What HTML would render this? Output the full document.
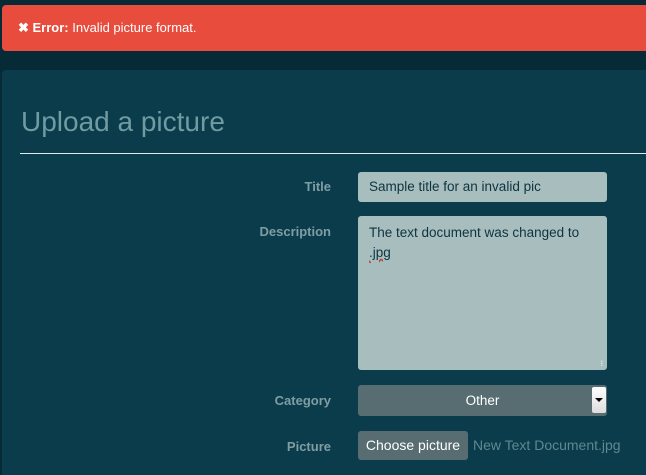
<!DOCTYPE html>
<html style="height:475px;overflow:hidden"><head><meta charset="utf-8"><style>
body{margin:0;width:646px;height:475px;background:#062b37;font-family:"Liberation Sans",sans-serif;overflow:hidden;position:relative}
.alert{position:absolute;left:2px;top:5px;width:650px;height:46px;background:#e74c3c;border-radius:4px;color:#fff;font-size:13px;line-height:46px;padding-left:16px;box-sizing:border-box}
.panel{position:absolute;left:2px;top:70px;width:660px;height:420px;background:#0b3c4b;border-radius:4px}
h1{position:absolute;left:21px;top:106px;margin:0;font-weight:normal;font-size:28px;color:#6f9ba1;}
.hr{position:absolute;left:20px;top:153px;width:640px;height:1px;background:#dfe8ea}
.lbl{position:absolute;right:315px;font-weight:bold;font-size:13px;color:#7f9ea3}
.inp{position:absolute;left:358px;width:249px;background:#a8bebe;border-radius:3px;color:#0e3340;font-size:13.5px;box-sizing:border-box;padding-left:11px}
</style></head><body>
<div class="alert"><b>&#10006; Error:</b> Invalid picture format.</div>
<div class="panel"></div>
<h1>Upload a picture</h1>
<div class="hr"></div>
<div class="lbl" style="top:179px">Title</div>
<div class="inp" style="top:172px;height:30px;line-height:30px">Sample title for an invalid pic</div>
<div class="lbl" style="top:224px">Description</div>
<div class="inp" style="top:216px;height:154px;padding-top:7px;line-height:20px">The text document was changed to<br><span style="text-decoration:underline wavy #c0392b">.jpg</span>
<span style="position:absolute;right:4px;bottom:2px;font-size:8px;color:#fff;line-height:8px">⁝</span></div>
<div class="lbl" style="top:393px">Category</div>
<div class="inp" style="top:385px;height:31px;background:#576d72;color:#fff;text-align:center;line-height:31px;padding-left:0">Other
<div style="position:absolute;right:1px;top:2px;width:14px;height:26px;background:linear-gradient(#fff,#ddd);border-radius:2px"><div style="position:absolute;left:3px;top:11px;border-left:4px solid transparent;border-right:4px solid transparent;border-top:4px solid #000"></div></div></div>
<div class="lbl" style="top:439px">Picture</div>
<div style="position:absolute;left:358px;top:431px;width:110px;height:29px;background:#576d72;border-radius:3px;color:#fff;font-size:14px;line-height:29px;text-align:center">Choose picture</div>
<div style="position:absolute;left:473px;top:431px;line-height:29px;font-size:14px;color:#5f8890">New Text Document.jpg</div>
</body></html>
